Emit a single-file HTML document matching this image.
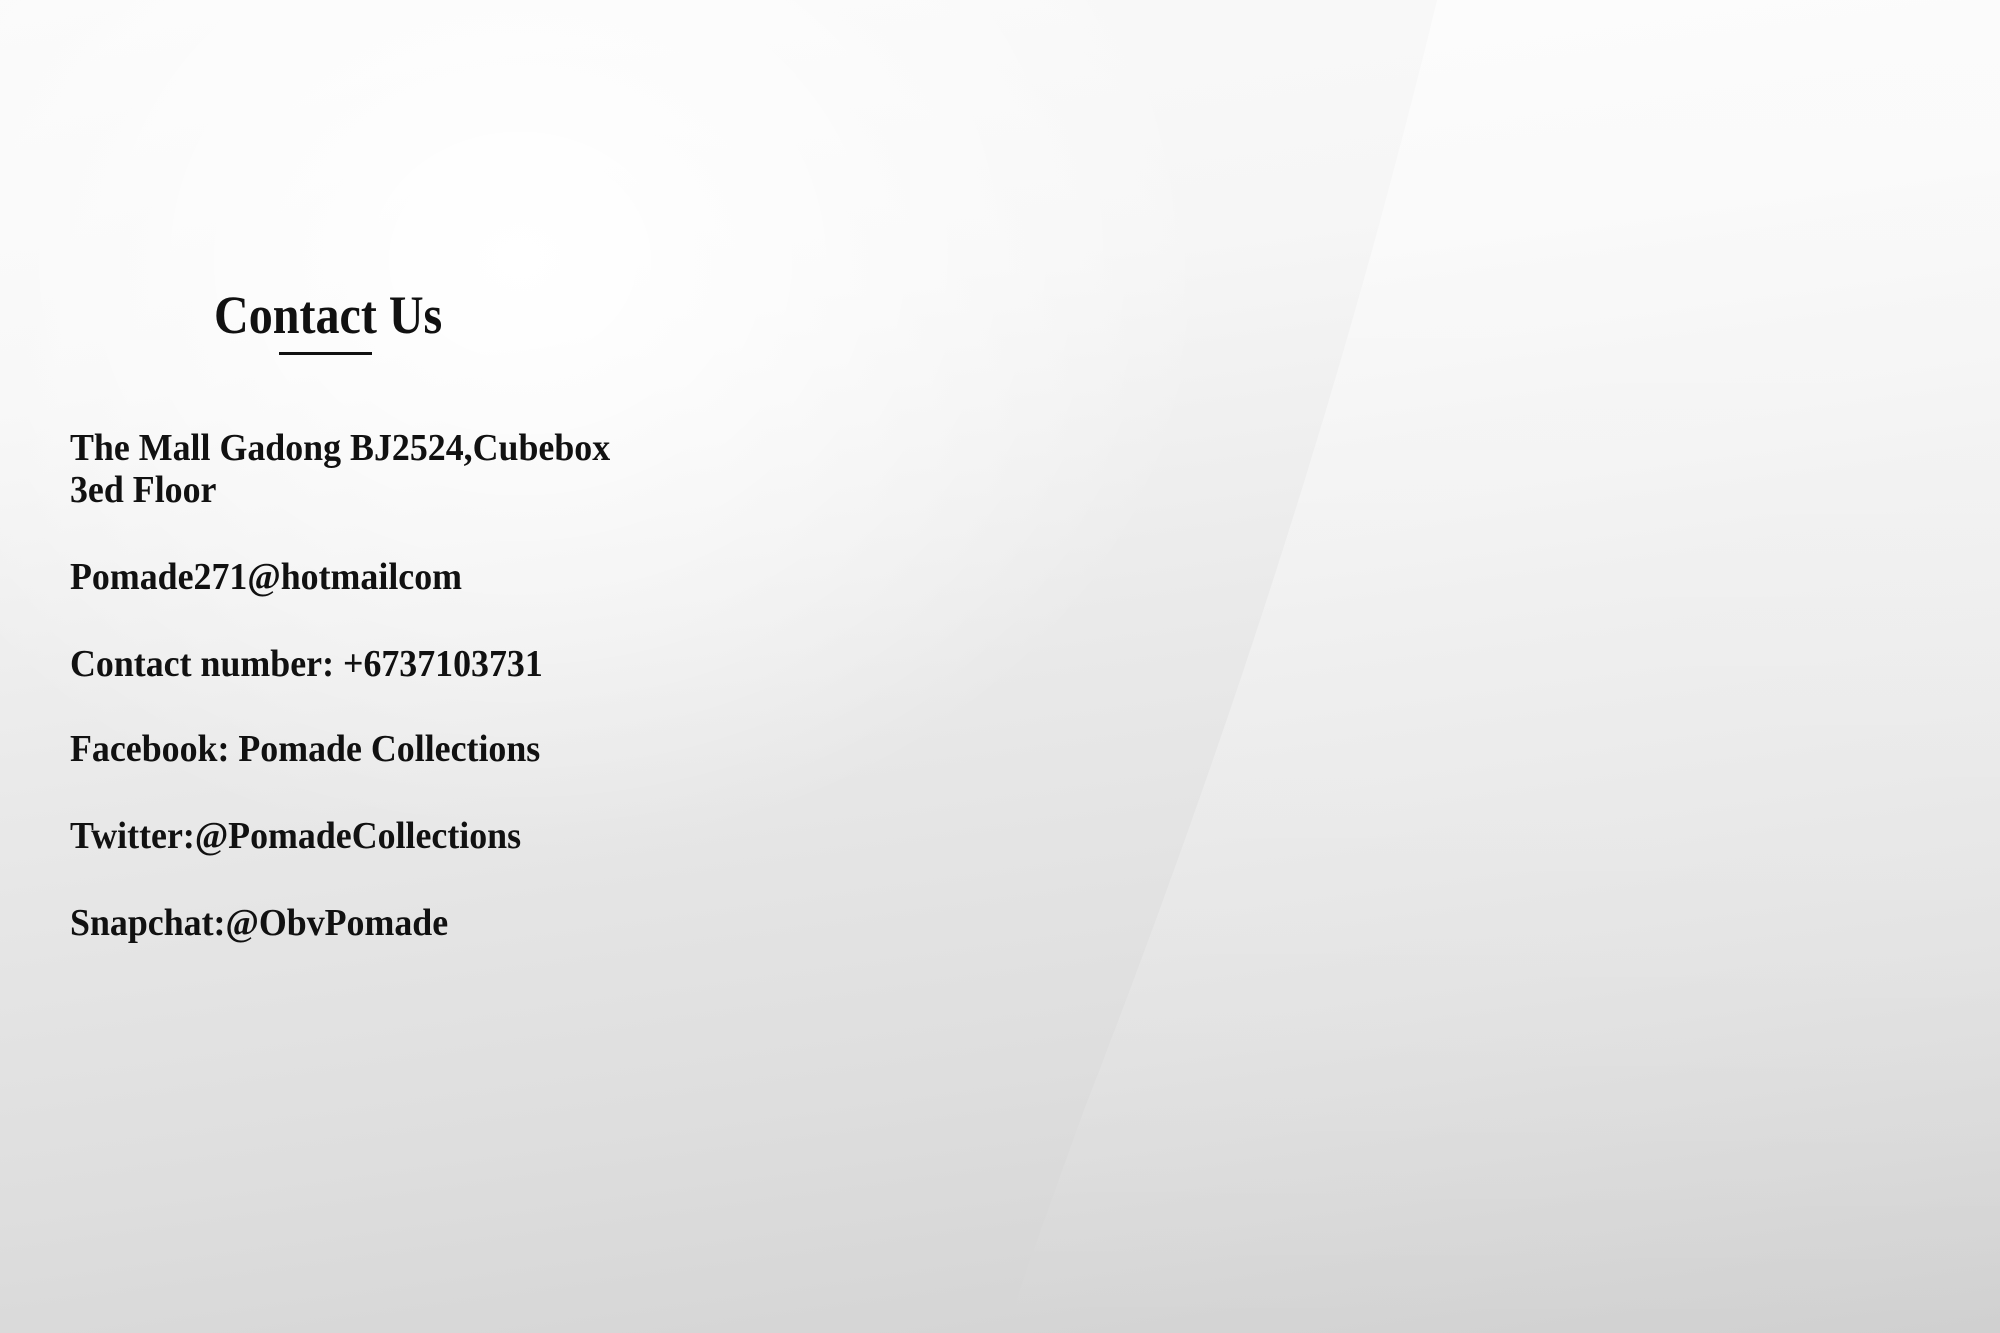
<!DOCTYPE html>
<html><head><meta charset="utf-8"><style>
html,body{margin:0;padding:0}
body{width:2000px;height:1333px;position:relative;overflow:hidden;
background:
radial-gradient(ellipse 700px 600px at 520px 260px, rgba(255,255,255,1) 0%, rgba(255,255,255,0.6) 40%, rgba(255,255,255,0) 100%),
linear-gradient(172deg,#fafafa 0%,#f6f6f6 25%,#e9e9e9 50%,#dedede 75%,#d0d0d0 100%);
font-family:"Liberation Serif",serif;font-weight:bold;color:#111}
svg{position:absolute;left:0;top:0}
.t{position:absolute;white-space:nowrap;line-height:1;transform-origin:0 0}
.b{font-size:38px;left:70px;transform:scaleX(0.944)}
</style></head><body>
<svg width="2000" height="1333">
<defs><linearGradient id="g" x1="0" y1="0" x2="0" y2="1">
<stop offset="0" stop-color="#fff" stop-opacity="0.55"/>
<stop offset="0.6" stop-color="#fff" stop-opacity="0.25"/>
<stop offset="1" stop-color="#fff" stop-opacity="0"/></linearGradient></defs>
<path d="M1437 0 C1340 400 1220 760 1084 1110 C1055 1190 1030 1260 1005 1333 L2000 1333 L2000 0 Z" fill="url(#g)"/>
</svg>
<div class="t" style="font-size:54px;left:214px;top:288px;transform:scaleX(0.89)">Contact Us</div>
<div style="position:absolute;left:279px;top:352px;width:93px;height:3px;background:#111"></div>
<div class="t b" style="top:429px">The Mall Gadong BJ2524,Cubebox</div>
<div class="t b" style="top:471px">3ed Floor</div>
<div class="t b" style="top:558px">Pomade271@hotmailcom</div>
<div class="t b" style="top:645px">Contact number: +6737103731</div>
<div class="t b" style="top:730px">Facebook: Pomade Collections</div>
<div class="t b" style="top:817px">Twitter:@PomadeCollections</div>
<div class="t b" style="top:904px">Snapchat:@ObvPomade</div>
</body></html>
